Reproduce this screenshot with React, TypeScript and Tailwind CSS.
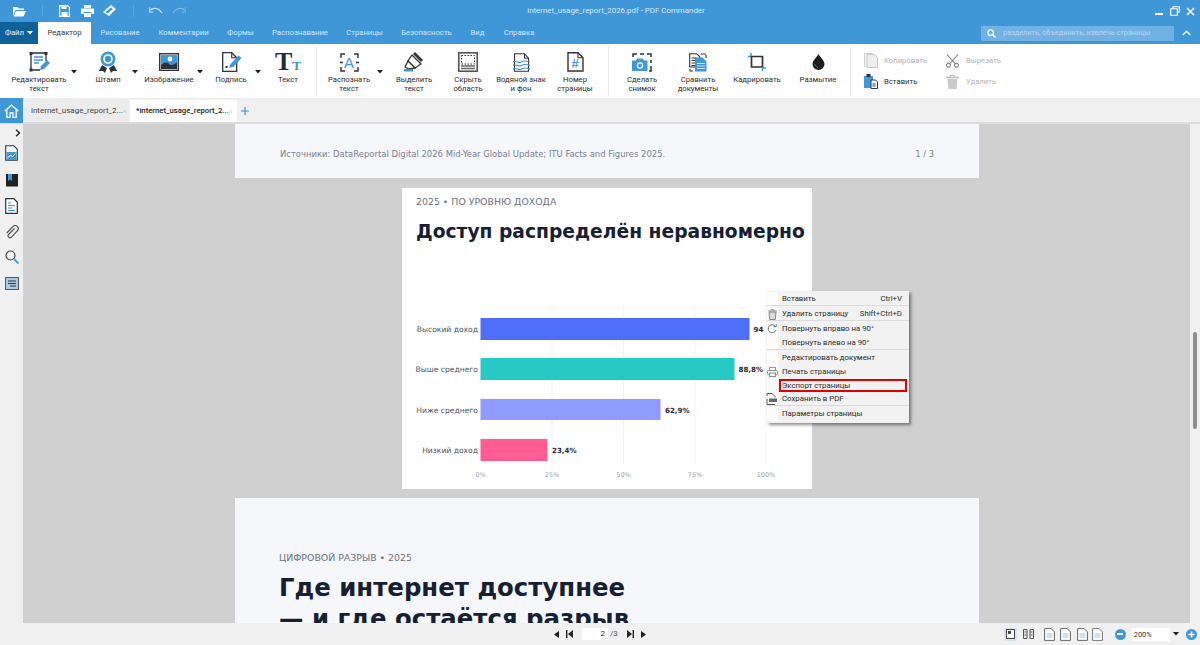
import React from "react";

const D = "#2f3337";
const B = "#3f97d8";

const Svg = ({ w = 24, h = 24, children, className = "" }: { w?: number; h?: number; children: React.ReactNode; className?: string }) => (
  <svg width={w} height={h} viewBox={`0 0 ${w} ${h}`} fill="none" className={className}>{children}</svg>
);

const Caret = ({ c = "#222" }: { c?: string }) => (
  <div className="w-[6px] h-[34px] flex items-start pt-[19px] shrink-0">
    <svg width="6" height="4" viewBox="0 0 6 4"><path d="M0 0h6L3 3.5z" fill={c} /></svg>
  </div>
);

const IEdit = () => (
  <Svg>
    <path d="M4 3h15v8M4 3v17h9" stroke={D} strokeWidth="1.3" />
    <rect x="2.5" y="2" width="3" height="3" fill={D} /><rect x="17.5" y="2" width="3" height="3" fill={D} />
    <rect x="2.5" y="18.5" width="3" height="3" fill={D} />
    <path d="M7 7h9M7 10h9M7 13h5" stroke={B} strokeWidth="1.3" />
    <path d="M13 20l1-4 6-6 3 3-6 6z" fill={B} />
  </Svg>
);
const IStamp = () => (
  <Svg>
    <circle cx="12" cy="9" r="7.5" fill={B} />
    <circle cx="12" cy="9" r="4.8" fill="#fff" />
    <circle cx="12" cy="9" r="3.2" fill={B} />
    <path d="M6 15l-3 6h4l2 2 2-5zM18 15l3 6h-4l-2 2-2-5z" fill={D} />
  </Svg>
);
const IImage = () => (
  <Svg w={20} h={18}>
    <rect x="0.7" y="0.7" width="18.6" height="16.6" fill="#fff" stroke={D} strokeWidth="1.4" />
    <rect x="2" y="2" width="16" height="14" fill={B} />
    <circle cx="11" cy="6" r="2.4" fill="#fff" />
    <path d="M2 12c4-3 6-3 8-1s5 1 8-2v7H2z" fill={D} />
  </Svg>
);
const ISign = () => (
  <Svg w={21} h={20}>
    <path d="M1.7.7h9l5 5v13.6h-14z" fill="#fff" stroke={D} strokeWidth="1.3" />
    <path d="M10.7.7v5h5" stroke={D} strokeWidth="1.1" />
    <rect x="4.5" y="14" width="2" height="2" fill={D} />
    <path d="M8 16l1.5-4 8-8.5 3 2.5-8 8.7z" fill={B} />
  </Svg>
);
const IText = () => (
  <div className="h-[22px] flex items-start justify-center font-['Liberation_Serif',serif] text-[#2b2b2b] leading-none">
    <span className="text-[26px] font-bold leading-[22px]">T</span>
    <span className="text-[13px] font-bold text-[#3f97d8] mt-[8px]">T</span>
  </div>
);
const IRecog = () => (
  <div className="relative w-[19px] h-[19px] flex items-center justify-center">
    <span className="font-['Liberation_Sans',sans-serif] text-[15px] leading-none text-[#3f97d8]">A</span>
    <svg width="19" height="19" viewBox="0 0 19 19" fill="none" className="absolute inset-0">
      <path d="M1 5V1h4M14 1h4v4M1 14v4h4M14 18h4v-4M0 9.5h3M16 9.5h3" stroke={D} strokeWidth="1.4" />
    </svg>
  </div>
);
const IHigh = () => (
  <Svg w={22} h={20}>
    <path d="M12 0l8 8-2 2-8-8z" fill={D} />
    <path d="M9 3l9 9-6 4-7-7z" fill="#fff" stroke={D} strokeWidth="1.3" />
    <path d="M5 9l-3 6 4 2 6-1z" fill="#fff" stroke={D} strokeWidth="1.3" />
    <path d="M1 17h9v2.5H1z" fill={B} />
  </Svg>
);
const IHide = () => (
  <Svg w={20} h={20}>
    <rect x="0.8" y="0.8" width="18.4" height="18.4" fill="#fff" stroke="#555" strokeWidth="1.6" />
    <rect x="3.5" y="3.5" width="13" height="8.5" stroke={D} strokeWidth="1" strokeDasharray="1.5 1.5" />
    <path d="M3 14h14M3 16.5h14" stroke="#666" strokeWidth="1.4" />
  </Svg>
);
const IWater = () => (
  <Svg w={17} h={19}>
    <path d="M1.5.7h10l4 4.5V18.3h-14z" fill="#fff" stroke={D} strokeWidth="1.1" />
    <path d="M11.5.7v4.5h4" stroke={D} strokeWidth="1" />
    <path d="M0 9c3-2 5.5 2 8.5 0s5.5-1 8.5 0M0 12.5c3-2 5.5 2 8.5 0s5.5-1 8.5 0M0 16c3-2 5.5 2 8.5 0s5.5-1 8.5 0" stroke={B} strokeWidth="1.2" />
  </Svg>
);
const INum = () => (
  <div className="relative w-[17px] h-[20px] flex items-end justify-center pb-[2px]">
    <svg width="17" height="20" viewBox="0 0 17 20" fill="none" className="absolute inset-0">
      <path d="M1 .8h10l5 5V19H1z" fill="#fff" stroke={D} strokeWidth="1.4" />
      <path d="M11 .8v5h5" stroke={D} strokeWidth="1.1" />
    </svg>
    <span className="relative font-['Liberation_Sans',sans-serif] font-bold text-[13px] leading-none text-[#3f97d8]">#</span>
  </div>
);
const ISnap = () => (
  <Svg w={20} h={19}>
    <path d="M1 4V1h4M8 1h4M15 1h4v3M19 7v3M19 13v5h-2" stroke={D} strokeWidth="1.5" />
    <path d="M0 7.5h4l1.5-2h5l1.5 2h3.5V18H0z" fill={B} />
    <circle cx="8" cy="12.5" r="3.2" fill="#fff" /><circle cx="8" cy="12.5" r="1.9" fill={B} />
  </Svg>
);
const ICompare = () => (
  <Svg w={18} h={19}>
    <path d="M.7.7h7l3 3V14H.7z" fill="#fff" stroke={D} strokeWidth="1.1" />
    <path d="M2.5 5h5M2.5 7.5h5M2.5 10h5M2.5 12.5h5" stroke={D} strokeWidth="1" />
    <path d="M6 4.5h7.5l4 4V18.5H6z" fill={B} />
    <path d="M8 10.5h8M8 13h8M8 15.5h8" stroke="#cfe6f7" strokeWidth="1" />
    <path d="M12 1h5M17 2v3M1 16v2h3" stroke={D} strokeWidth="1.1" />
  </Svg>
);
const ICrop = () => (
  <Svg w={18} h={18}>
    <path d="M0 3.5h3M3 0v3" stroke={B} strokeWidth="1.4" />
    <path d="M3.5 3.5h11v10.5h-11z" stroke={D} strokeWidth="1.7" />
    <path d="M14.500 14.5v3.5M15 15h3" stroke={B} strokeWidth="1.4" />
  </Svg>
);
const IDrop = () => (
  <Svg w={13} h={16}>
    <path d="M6.5 0c1.8 3.5 6 6.5 6 10a6 6 0 0 1-12 0C.5 6.5 4.7 3.5 6.5 0z" fill="#1d1d1d" />
    <path d="M3 10c0 2 1.5 3 3 3.5" stroke="#666" strokeWidth="1" />
  </Svg>
);

const Tool = ({ w, ml, a, b, icon }: { w: string; ml: string; a: string; b?: string; icon: React.ReactNode }) => (
  <div className={`${w} ${ml} shrink-0 flex flex-col items-center`}>
    <div className="h-[22px] flex items-center justify-center">{icon}</div>
    <div className="mt-[2px] text-[7.7px] leading-[9px] text-center text-[#2c2c2c] whitespace-nowrap">{a}{b && <br />}{b}</div>
  </div>
);

const Sep = ({ ml }: { ml: string }) => <div className={`w-px h-[49px] -mt-[4px] bg-[#e6e6e6] shrink-0 ${ml}`} />;

const Nav = ({ t, w }: { t: string; w: string }) => (
  <div className={`${w} shrink-0 text-center text-[#d3e8f8]`}>{t}</div>
);

const MenuRow = ({ t, k, icon, line, hot }: { t: string; k?: string; icon?: React.ReactNode; line?: boolean; hot?: boolean }) => (
  <div className={`flex items-center ${hot ? "h-[13px]" : "h-[14px]"} ${line ? "border-b border-[#dcdcdc]" : ""}`}>
    <div className="w-[11px] h-full shrink-0 bg-[#fbfbfb] relative">{icon}</div>
    {hot ? (
      <div className="flex-1 flex items-center h-full border-[2px] border-[#e00000] ml-[1px] mr-[2px] pl-[1px]"><span>{t}</span></div>
    ) : (
      <div className="flex-1 flex justify-between items-center h-full pl-[4px] pr-[7px]">
        <span>{t}</span>{k && <span>{k}</span>}
      </div>
    )}
  </div>
);

const rows = [
  { l: "Высокий доход", y: 318, w: 269, c: "#4f6ef7", v: "94", vx: 753.5, h: 22 },
  { l: "Выше среднего", y: 358, w: 254, c: "#26c9c3", v: "88,8%", vx: 738.5, h: 22 },
  { l: "Ниже среднего", y: 399, w: 180, c: "#8f9bff", v: "62,9%", vx: 665, h: 21 },
  { l: "Низкий доход", y: 439, w: 67, c: "#ff5c93", v: "23,4%", vx: 552, h: 22 },
];

const Chart = () => (
  <svg width="410" height="301" viewBox="402 188 410 301" className="absolute left-0 top-0" fontFamily="'DejaVu Sans', sans-serif">
    {[552, 623.5, 695, 766].map((x) => <line key={x} x1={x} x2={x} y1="305" y2="465" stroke="#f2f3f6" strokeWidth="1" />)}
    {rows.map((r) => (
      <g key={r.l}>
        <rect x="480.5" y={r.y} width={r.w} height={r.h} fill={r.c} />
        <text x="478" y={r.y + 14} textAnchor="end" fontSize="7.6" fill="#4b5563">{r.l}</text>
        <text x={r.vx} y={r.y + 13.5} fontSize="7.1" fontWeight="700" fill="#1f2937">{r.v}</text>
      </g>
    ))}
    {[["0%", 480.5], ["25%", 552], ["50%", 623.5], ["75%", 695], ["100%", 766]].map(([t, x]) => (
      <text key={t as string} x={x as number} y="476.5" textAnchor="middle" fontSize="6.5" fill="#9ca3af">{t}</text>
    ))}
  </svg>
);

const SideDoc = ({ kind }: { kind: number }) => {
  if (kind === 0) return <Svg w={13} h={16}><path d="M.7.7h8l3.6 3.6v11H.7z" fill="#fff" stroke={D} strokeWidth="1.1" /><rect x="1.5" y="7" width="10" height="8" fill={B} /><path d="M2.5 12.5l3-2 2 1 3-3" stroke="#fff" strokeWidth="1" /></Svg>;
  if (kind === 1) return <Svg w={12} h={13}><rect width="12" height="12.5" fill="#222" /><path d="M2 0h4v7L4 5.5 2 7z" fill={B} /></Svg>;
  if (kind === 2) return <Svg w={13} h={16}><path d="M.7.7h8l3.6 3.6v11H.7z" fill="#fff" stroke={D} strokeWidth="1.2" /><path d="M3 5h3M3 7.5h7M3 10h4M3 12.5h7" stroke={B} strokeWidth="1.2" /></Svg>;
  if (kind === 3) return <Svg w={14} h={14}><path d="M9.5 3.5L3.5 9.5a2 2 0 0 0 2.8 2.8l6-6.5a3 3 0 0 0-4.4-4.2L1.8 8" stroke="#555" strokeWidth="1.2" /></Svg>;
  if (kind === 4) return <Svg w={14} h={14}><circle cx="5.5" cy="5.5" r="4.5" stroke="#444" strokeWidth="1.2" /><path d="M9 9l4.5 4.5" stroke={B} strokeWidth="1.8" /></Svg>;
  return <Svg w={14} h={13}><rect x=".5" y=".5" width="13" height="12" fill="#a9cde9" stroke="#555" /><path d="M3 4h8M3 6.5h8M5 9h6" stroke="#333" strokeWidth="1" /></Svg>;
};

const PageIc = ({ c = "#666" }: { c?: string }) => (
  <Svg w={11} h={13}><path d="M.6.6h6.5l3.3 3.3v8.5H.6z" fill="#fff" stroke={c} strokeWidth="1" /><rect x="2.5" y="5" width="6" height="5" fill="#cfe2f1" /></Svg>
);

export default function App() {
  return (
    <div className="w-[1200px] h-[645px] flex flex-col overflow-hidden bg-[#d0d0d0] font-['Roboto',sans-serif] text-[#333]">
      {/* title bar */}
      <div className="h-[22px] bg-[#3f97d8] flex items-center shrink-0 relative">
        <div className="ml-[13px] w-[13px]">
          <Svg w={13} h={11}><path d="M0 1h4.5l1.5 1.5h5V4H2.5L0 10z" fill="#fff" /><path d="M3 5h10l-2.5 5.5H.7z" fill="#fff" /></Svg>
        </div>
        <div className="ml-[16px] w-px h-[12px] bg-[#5aa6df]" />
        <div className="ml-[16px]"><Svg w={11} h={12}><path d="M.6.6h8l1.8 1.8v9H.6z" stroke="#fff" strokeWidth="1.1" /><rect x="2.5" y="1" width="5" height="3" fill="#fff" /><rect x="2.5" y="7" width="6" height="4" fill="#fff" /></Svg></div>
        <div className="ml-[11px]"><Svg w={13} h={12}><rect x="3" y="0" width="7" height="3" fill="#fff" /><path d="M0 3.5h13v5.5h-2.5V7h-8v2H0z" fill="#fff" /><rect x="3" y="8" width="7" height="4" fill="#fff" /></Svg></div>
        <div className="ml-[9px]"><Svg w={13} h={12}><path d="M0 7l8-7 5 4-7 7z" fill="#fff" /><path d="M2.5 7l5.5-4.500 2 1.500-5.500 4.500z" fill="#3f97d8" /></Svg></div>
        <div className="ml-[17px] w-px h-[12px] bg-[#5aa6df]" />
        <div className="ml-[15px]"><Svg w={14} h={8}><path d="M1 3c4-3 9-2 12 3" stroke="#d6e9f8" strokeWidth="1.2" /><path d="M0 0v5h4" stroke="#d6e9f8" strokeWidth="1.2" /></Svg></div>
        <div className="ml-[9px]"><Svg w={14} h={8}><path d="M13 3C9 0 4 1 1 6" stroke="#7db8e6" strokeWidth="1.2" /><path d="M14 0v5h-4" stroke="#7db8e6" strokeWidth="1.2" /></Svg></div>
        <div className="ml-[340px] text-[7.9px] text-[#d6eafa] whitespace-nowrap w-[180px] text-center">internet_usage_report_2026.pdf - PDF Commander</div>
        <div className="ml-auto flex items-center">
          <svg width="8" height="2" viewBox="0 0 8 2" className="mt-[5px]"><rect width="8" height="2" fill="#fff" /></svg>
          <svg width="10" height="10" viewBox="0 0 10 10" fill="none" className="ml-[7px]"><path d="M3 2.5V.7h6.3v5.500H7.500M.7 2.700h6.600v6.600H.7z" stroke="#fff" strokeWidth="1.1" /></svg>
          <svg width="9" height="9" viewBox="0 0 9 9" fill="none" className="ml-[6px] mr-[5px]"><path d="M1 1l7 7M8 1L1 8" stroke="#fff" strokeWidth="1.5" /></svg>
        </div>
      </div>
      {/* menu tabs */}
      <div className="h-[22px] bg-[#3f97d8] flex items-stretch shrink-0 text-[7.7px]">
        <div className="w-[38px] bg-[#0f6299] text-[#e5f1fa] flex items-center pl-[5px] gap-[3px]">Файл
          <svg width="6" height="4" viewBox="0 0 6 4"><path d="M0 0h6L3 3.5z" fill="#fff" /></svg>
        </div>
        <div className="w-[53px] bg-white text-[#333] flex items-center justify-center">Редактор</div>
        <div className="flex items-center">
          <Nav w="w-[58px]" t="Рисование" />
          <Nav w="w-[69px]" t="Комментарии" />
          <Nav w="w-[45px]" t="Формы" />
          <Nav w="w-[74px]" t="Распознавание" />
          <Nav w="w-[55px]" t="Страницы" />
          <Nav w="w-[69px]" t="Безопасность" />
          <Nav w="w-[33px]" t="Вид" />
          <Nav w="w-[50px]" t="Справка" />
        </div>
        <div className="ml-auto flex items-center">
          <div className="w-[193px] h-[15px] bg-[#72b1e3] flex items-center pl-[6px] text-[#b5d8f2]">
            <svg width="9" height="9" viewBox="0 0 9 9" fill="none"><circle cx="3.7" cy="3.7" r="2.8" stroke="#fff" strokeWidth="1.3" /><path d="M5.8 5.8L8.5 8.5" stroke="#fff" strokeWidth="1.4" /></svg>
            <span className="ml-[7px] text-[7.3px] whitespace-nowrap">разделить, объединить, извлечь страницы</span>
          </div>
          <svg width="9" height="6" viewBox="0 0 9 6" fill="none" className="ml-[8px] mr-[9px]"><path d="M.7 5l3.8-3.800L8.300 5" stroke="#fff" strokeWidth="1.4" /></svg>
        </div>
      </div>
      {/* ribbon */}
      <div className="h-[54px] bg-white flex items-start pt-[7px] shrink-0 pl-[7px]">
        <div className="flex items-start">
          <Tool w="w-[64px]" ml="ml-0" a="Редактировать" b="текст" icon={<IEdit />} />
          <Caret />
          <Tool w="w-[48px]" ml="ml-[7px]" a="Штамп" icon={<IStamp />} />
          <Caret />
          <Tool w="w-[56px]" ml="ml-[3px]" a="Изображение" icon={<IImage />} />
          <Caret />
          <Tool w="w-[48px]" ml="ml-[4px]" a="Подпись" icon={<ISign />} />
          <Caret />
          <Tool w="w-[40px]" ml="ml-[7px]" a="Текст" icon={<IText />} />
          <Sep ml="ml-[8px]" />
          <Tool w="w-[56px]" ml="ml-[4px]" a="Распознать" b="текст" icon={<IRecog />} />
          <Caret />
          <Tool w="w-[50px]" ml="ml-[6px]" a="Выделить" b="текст" icon={<IHigh />} />
          <Tool w="w-[50px]" ml="ml-[4px]" a="Скрыть" b="область" icon={<IHide />} />
          <Tool w="w-[54px]" ml="ml-[1px]" a="Водяной знак" b="и фон" icon={<IWater />} />
          <Tool w="w-[50px]" ml="ml-[2px]" a="Номер" b="страницы" icon={<INum />} />
          <Sep ml="ml-[8px]" />
          <Tool w="w-[50px]" ml="ml-[8px]" a="Сделать" b="снимок" icon={<ISnap />} />
          <Tool w="w-[56px]" ml="ml-[3px]" a="Сравнить" b="документы" icon={<ICompare />} />
          <Tool w="w-[56px]" ml="ml-[3px]" a="Кадрировать" icon={<ICrop />} />
          <Tool w="w-[50px]" ml="ml-[8px]" a="Размытие" icon={<IDrop />} />
          <Sep ml="ml-[7px]" />
        </div>
        <div className="ml-[13px] text-[7.7px] flex flex-col gap-[6px] mt-[2px] w-[82px]">
          <div className="h-[15px] flex items-center gap-[6px] text-[#b3b3b3]">
            <Svg w={14} h={15}><path d="M.5.5h8l3 3v10H.5z" fill="#f4f4f4" stroke="#cfcfcf" /><path d="M3 1.5h7.5l3 3v10H3z" fill="#eee" stroke="#c9c9c9" /></Svg>Копировать
          </div>
          <div className="h-[15px] flex items-center gap-[6px] text-[#2c2c2c]">
            <Svg w={14} h={15}><rect y="2" width="9" height="12" fill={B} /><rect x="2.5" y="0" width="4" height="3" fill={D} /><path d="M7 6h4.5l2 2v6.5H7z" fill="#fff" stroke={D} strokeWidth="1" /><path d="M8.5 10h3M8.5 12h3" stroke={D} /></Svg>Вставить
          </div>
        </div>
        <div className="text-[7.7px] flex flex-col gap-[6px] mt-[2px] text-[#b3b3b3]">
          <div className="h-[15px] flex items-center gap-[7px]">
            <Svg w={13} h={14}><circle cx="2.5" cy="11.3" r="2" stroke="#666" /><circle cx="10.5" cy="11.3" r="2" stroke="#666" /><path d="M1 .5l8 9M12 .5l-8 9" stroke="#777" strokeWidth="1.1" /></Svg>Вырезать
          </div>
          <div className="h-[15px] flex items-center gap-[7px]">
            <Svg w={13} h={14}><path d="M0 2.5h13" stroke="#bbb" strokeWidth="1.6" /><path d="M4 1.5V.5h5v1" stroke="#bbb" /><path d="M1.5 4h10l-1 10h-8z" fill="#c9c9c9" /></Svg>Удалить
          </div>
        </div>
      </div>
      {/* document tabs */}
      <div className="h-[26px] bg-[#f0f0f0] flex items-stretch shrink-0 text-[8px] border-b-[2px] border-[#dcdcdc]">
        <div className="w-[23px] bg-[#3f97d8] flex items-center justify-center h-[25px]">
          <svg width="15" height="14" viewBox="0 0 15 14" fill="none"><path d="M.8 7L7.5 1l6.7 6M2.800 5.500v8h3.200V9h3v4.500h3.200v-8" stroke="#fff" strokeWidth="1.3" /></svg>
        </div>
        <div className="ml-px mt-[2px] w-[105px] bg-[#ececec] flex items-center justify-between pl-[7px] pr-[3px] text-[#444] whitespace-nowrap">internet_usage_report_2...
          <svg width="7" height="7" viewBox="0 0 7 7" fill="none"><path d="M.5.5l6 6M6.5.5l-6 6" stroke="#aaa" /></svg>
        </div>
        <div className="ml-px mt-[2px] w-[107px] bg-white flex items-center justify-between pl-[6px] pr-[5px] text-[7.7px] text-[#222] font-medium whitespace-nowrap">*internet_usage_report_2...
          <svg width="7" height="7" viewBox="0 0 7 7" fill="none"><path d="M.5.5l6 6M6.5.5l-6 6" stroke="#aaa" /></svg>
        </div>
        <div className="ml-[4px] mt-[2px] flex items-center">
          <svg width="8" height="8" viewBox="0 0 8 8" fill="none"><path d="M4 0v8M0 4h8" stroke={B} strokeWidth="1.2" /></svg>
        </div>
      </div>
      {/* main */}
      <div className="flex-1 flex min-h-0">
        <div className="w-[23px] bg-[#f0f0f0] shrink-0 flex flex-col items-center">
          <svg width="6" height="8" viewBox="0 0 6 8" fill="none" className="mt-[5px] ml-[12px]"><path d="M1 .7L4.5 4 1 7.3" stroke="#222" strokeWidth="1.4" /></svg>
          <div className="mt-[8px] h-[16px] flex items-center"><SideDoc kind={0} /></div>
          <div className="mt-[11px] h-[16px] flex items-center"><SideDoc kind={1} /></div>
          <div className="mt-[10px] h-[16px] flex items-center"><SideDoc kind={2} /></div>
          <div className="mt-[10px] h-[16px] flex items-center"><SideDoc kind={3} /></div>
          <div className="mt-[9px] h-[16px] flex items-center"><SideDoc kind={4} /></div>
          <div className="mt-[10px] h-[16px] flex items-center"><SideDoc kind={5} /></div>
        </div>
        <div className="flex-1 relative overflow-hidden flex flex-col items-center bg-[#d0d0d0] pl-px font-['DejaVu_Sans',sans-serif]">
          <div className="w-[744px] h-[54px] bg-[#f5f7fb] shrink-0 flex justify-between items-start pt-[24px] px-[45px] text-[8.45px] text-[#7a8291]">
            <span>Источники: DataReportal Digital 2026 Mid-Year Global Update; ITU Facts and Figures 2025.</span>
            <span className="text-[8.4px]">1 / 3</span>
          </div>
          <div className="relative w-[410px] h-[301px] bg-white shrink-0 mt-[10px]">
            <Chart />
            <div className="relative pl-[14px] pt-[7px] text-[9.4px] leading-[13px] text-[#6b7280] whitespace-nowrap">2025 • ПО УРОВНЮ ДОХОДА</div>
            <div className="relative pl-[14px] mt-[12px] text-[18.7px] leading-[24px] font-bold text-[#172033] whitespace-nowrap">Доступ распределён неравномерно</div>
          </div>
          <div className="w-[744px] h-[130px] bg-[#f5f7fb] shrink-0 mt-[9px] pl-[44px] pt-[53px] text-[#172033]">
            <div className="text-[9.4px] leading-[13px] text-[#6b7280] whitespace-nowrap">ЦИФРОВОЙ РАЗРЫВ • 2025</div>
            <div className="mt-[8px] text-[24.4px] leading-[31px] font-bold whitespace-nowrap">Где интернет доступнее<br />— и где остаётся разрыв</div>
          </div>
        </div>
        <div className="w-[10px] bg-[#f0f0f0] shrink-0 flex flex-col">
          <div className="mt-[208px] h-[97px] w-[4px] ml-[3px] rounded-full bg-[#8f8f8f]" />
        </div>
      </div>
      {/* status */}
      <div className="h-[22px] bg-[#f0f0f0] shrink-0 flex items-center text-[8px] relative z-10">
        <svg width="5" height="7" viewBox="0 0 5 7" className="ml-[554px]"><path d="M5 0v7L0 3.5z" fill="#222" /></svg>
        <svg width="7" height="8" viewBox="0 0 7 8" className="ml-[7px]"><path d="M0 0h1.4v8H0zM7 0v8L2 4z" fill="#222" /></svg>
        <div className="ml-[9px] w-[26px] h-[12px] bg-white text-right pr-[3px] leading-[12px] text-[#333]">2</div>
        <span className="ml-[2px] text-[#555]">/3</span>
        <svg width="7" height="8" viewBox="0 0 7 8" className="ml-[9px]"><path d="M7 0H5.6v8H7zM0 0v8l5-4z" fill="#222" /></svg>
        <svg width="5" height="7" viewBox="0 0 5 7" className="ml-[7px]"><path d="M0 0v7l5-3.5z" fill="#222" /></svg>
        <div className="ml-[358px] w-[13px] h-[13px] bg-[#d5e6f3] flex items-center justify-center">
          <Svg w={9} h={10}><rect x=".5" y=".5" width="8" height="9" fill="#fff" stroke="#444" /><rect x="2" y="2" width="3" height="3" fill="#444" /></Svg>
        </div>
        <div className="ml-[6px]"><Svg w={11} h={10}><path d="M.5.5h3.5v9H.5zM7 .5h3.5v9H7z" stroke="#555" /><path d="M1.5 3h2M1.5 6h2M7.500 3h2M7.500 6h2" stroke="#555" /></Svg></div>
        <div className="ml-[10px]"><PageIc /></div>
        <div className="ml-[5px]"><PageIc /></div>
        <div className="ml-[6px]"><PageIc /></div>
        <div className="ml-[4px]"><PageIc c="#777" /></div>
        <div className="ml-[12px] w-[11px] h-[11px] rounded-full bg-[#3f97d8] flex items-center justify-center"><div className="w-[6px] h-[2px] bg-white" /></div>
        <div className="ml-[6px] w-[38px] h-[13px] bg-white text-[7.4px] text-[#333] pl-[2px] leading-[13px]">200%</div>
        <svg width="6" height="4" viewBox="0 0 6 4" className="ml-[3px]"><path d="M0 0h6L3 3.5z" fill="#222" /></svg>
        <svg width="11" height="11" viewBox="0 0 11 11" className="ml-[7px]"><circle cx="5.5" cy="5.5" r="5.5" fill={B} /><path d="M5.5 2.500v6M2.500 5.5h6" stroke="#fff" strokeWidth="1.6" /></svg>
      </div>
      {/* context menu */}
      <div className="absolute left-[767px] top-[291px] w-[142px] h-[132px] bg-[#f2f2f2] shadow-[2px_2px_3px_rgba(0,0,0,0.45)] pt-[1px] text-[7.8px] text-[#2a2a2a] font-['Roboto',sans-serif] z-20">
        <MenuRow t="Вставить" k="Ctrl+V" line />
        <div className="h-px" />
        <MenuRow t="Удалить страницу" k="Shift+Ctrl+D" line icon={
          <svg width="9" height="11" viewBox="0 0 9 11" fill="none" className="absolute left-[1px] top-[2px]"><path d="M0 2h9M3 2V.7h3V2" stroke="#999" /><path d="M1 3h7l-.7 7.5H1.700z" stroke="#888" fill="#ddd" /></svg>
        } />
        <div className="h-px" />
        <MenuRow t="Повернуть вправо на 90°" icon={
          <svg width="10" height="10" viewBox="0 0 10 10" fill="none" className="absolute left-0 top-[2px]"><path d="M8.5 2.5A4 4 0 1 0 9 6" stroke="#666" strokeWidth=".9" /><path d="M6.5 2.7h2.700V0" stroke="#666" strokeWidth=".9" /></svg>
        } />
        <MenuRow t="Повернуть влево на 90°" line />
        <div className="h-px" />
        <MenuRow t="Редактировать документ" />
        <MenuRow t="Печать страницы" icon={
          <svg width="11" height="10" viewBox="0 0 11 10" fill="none" className="absolute left-0 top-[2px]"><rect x="2.5" y=".5" width="6" height="3" stroke="#999" /><rect x=".5" y="3.5" width="10" height="4" rx="1" stroke="#888" /><rect x="2.5" y="6" width="6" height="3.5" fill="#fff" stroke="#888" /></svg>
        } />
        <MenuRow t="Экспорт страницы" hot />
        <MenuRow t="Сохранить в PDF" line icon={
          <div className="absolute -left-[1px] top-[1px] w-[11px] h-[12px]"><svg width="11" height="12" viewBox="0 0 11 12" fill="none"><path d="M1 3V.5h5l3 3v1M1 6v5.500h8" stroke="#555" /><rect x="3" y="5.500" width="8" height="3.500" fill="#666" /></svg></div>
        } />
        <div className="h-[1px]" />
        <MenuRow t="Параметры страницы" />
      </div>
    </div>
  );
}
